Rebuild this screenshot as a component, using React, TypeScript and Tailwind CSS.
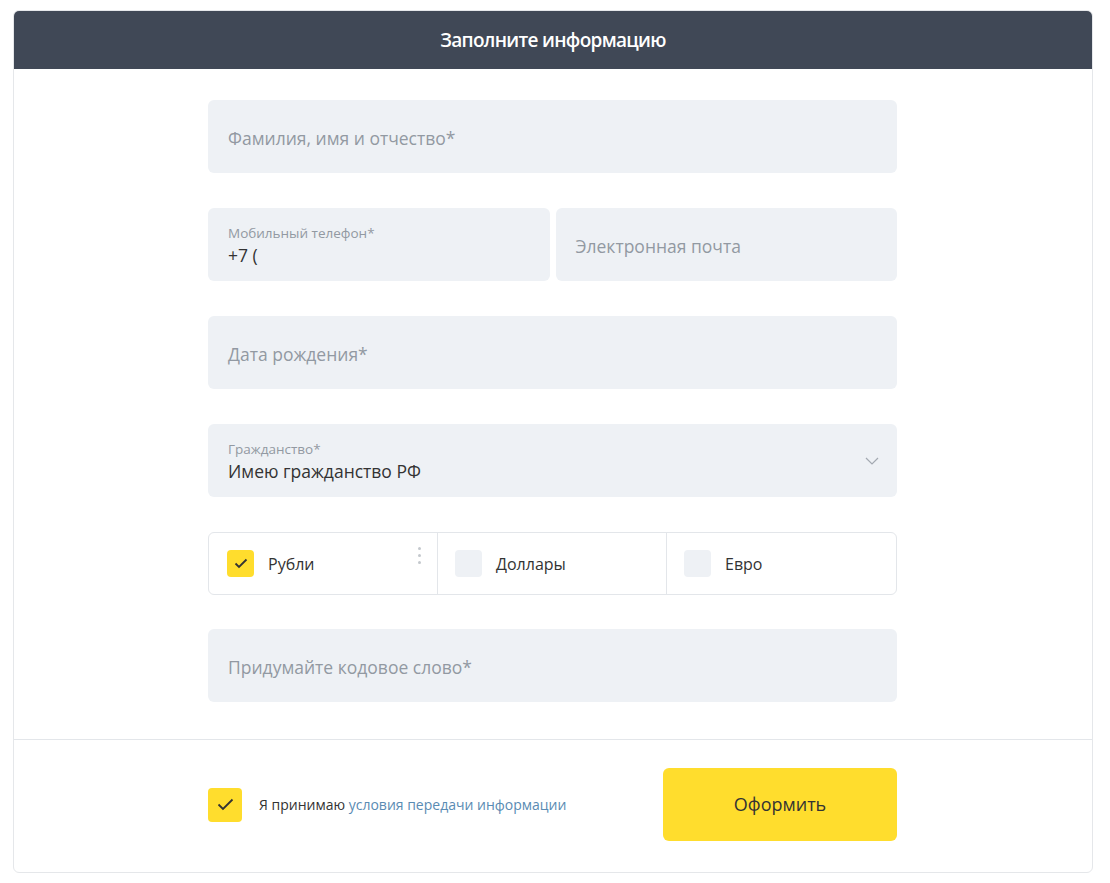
import React from 'react';

const font = { fontFamily: '"Open Sans", "Noto Sans", sans-serif' };

function Field({ placeholder }: { placeholder: string }) {
  return (
    <div className="h-[73px] rounded-md bg-[#eef1f5] px-5 pt-[4px] flex items-center">
      <span className="text-[17.5px] text-[#9299a2]">{placeholder}</span>
    </div>
  );
}

function Check({ on }: { on: boolean }) {
  return (
    <span
      className={`w-[27px] h-[27px] rounded-[4px] flex items-center justify-center ${
        on ? 'bg-[#ffdd2d]' : 'bg-[#eef1f5]'
      }`}
    >
      {on && (
        <svg width="14" height="11" viewBox="0 0 14 11" fill="none">
          <path d="M1.5 5.5L5 9L12.5 1.5" stroke="#333" strokeWidth="1.8" />
        </svg>
      )}
    </span>
  );
}

export default function App() {
  return (
    <div className="bg-white min-h-screen pt-[10px] px-[13px] pb-[10px]" style={font}>
      <div className="w-[1080px] rounded-md border border-[#e5e7ea] overflow-hidden">
        <div className="h-[58px] bg-[#404856] flex items-center justify-center">
          <h1 className="text-white text-[19px] font-semibold tracking-[-0.7px]">Заполните информацию</h1>
        </div>

        <div className="w-[689px] ml-[194px] pt-[31px] pb-[37px] flex flex-col gap-[35px]">
          <Field placeholder="Фамилия, имя и отчество*" />

          <div className="grid grid-cols-2 gap-[6px]">
            <div className="h-[73px] rounded-md bg-[#eef1f5] px-5 pt-[3px] flex flex-col justify-center">
              <span className="text-[13.5px] text-[#9299a2] leading-[18px]">Мобильный телефон*</span>
              <span className="text-[17.5px] text-[#333] leading-[26px]">+7 (</span>
            </div>
            <Field placeholder="Электронная почта" />
          </div>

          <Field placeholder="Дата рождения*" />

          <div className="h-[73px] rounded-md bg-[#eef1f5] px-5 flex items-center justify-between">
            <div className="flex flex-col pt-[3px]">
              <span className="text-[13.5px] text-[#9299a2] leading-[18px]">Гражданство*</span>
              <span className="text-[17.5px] text-[#333] leading-[26px]">Имею гражданство РФ</span>
            </div>
            <svg width="14" height="8" viewBox="0 0 14 8" fill="none" className="mr-[-2px]">
              <path d="M1 1L7 7L13 1" stroke="#a3a9b1" strokeWidth="1.2" />
            </svg>
          </div>

          <div className="h-[63px] -mb-[1px] rounded-md border border-[#e3e6ea] grid grid-cols-3">
            <div className="relative flex items-center gap-[14px] pl-[18px] border-r border-[#e3e6ea]">
              <Check on />
              <span className="text-[16px] text-[#333]">Рубли</span>
              <span className="absolute right-[16px] top-[14px] flex flex-col gap-[4px]">
                <span className="w-[3px] h-[3px] rounded-full bg-[#c4c8cd]" />
                <span className="w-[3px] h-[3px] rounded-full bg-[#c4c8cd]" />
                <span className="w-[3px] h-[3px] rounded-full bg-[#c4c8cd]" />
              </span>
            </div>
            <div className="flex items-center gap-[14px] pl-[17px] border-r border-[#e3e6ea]">
              <Check on={false} />
              <span className="text-[16px] text-[#333]">Доллары</span>
            </div>
            <div className="flex items-center gap-[14px] pl-[17px]">
              <Check on={false} />
              <span className="text-[16px] text-[#333]">Евро</span>
            </div>
          </div>

          <Field placeholder="Придумайте кодовое слово*" />
        </div>

        <div className="border-t border-[#e3e6ea] h-[133px] pb-[3px] flex items-center">
          <div className="w-[689px] ml-[194px] flex items-center justify-between">
            <div className="flex items-center gap-[17px]">
              <span className="w-[34px] h-[34px] rounded-[4px] bg-[#ffdd2d] flex items-center justify-center">
                <svg width="17" height="13" viewBox="0 0 17 13" fill="none">
                  <path d="M1.5 6.5L6 11L15.5 1.5" stroke="#333" strokeWidth="1.8" />
                </svg>
              </span>
              <span className="text-[14px] text-[#333]">
                Я принимаю <span className="text-[#5a8bb3]">условия передачи информации</span>
              </span>
            </div>
            <button className="w-[234px] h-[73px] rounded-md bg-[#ffdd2d] text-[18px] text-[#333]">
              Оформить
            </button>
          </div>
        </div>
      </div>
    </div>
  );
}
